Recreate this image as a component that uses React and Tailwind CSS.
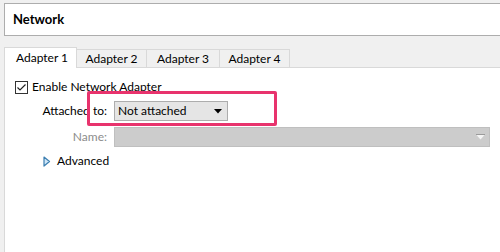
import React from 'react';

const tabs = [
  { label: 'Adapter 1', width: 'w-[73px]' },
  { label: 'Adapter 2', width: 'w-[70px]' },
  { label: 'Adapter 3', width: 'w-[73px]' },
  { label: 'Adapter 4', width: 'w-[70px]' },
];

const App = () => {
  return (
    <div
      className="relative w-[500px] h-[252px] bg-[#f0f0f0] overflow-hidden flex flex-col text-[12px] text-black"
      style={{ fontFamily: 'Lato, "Liberation Sans", sans-serif' }}
    >
      {/* Header */}
      <div className="mt-[3px] ml-[4px] h-[33px] bg-white border border-r-0 border-[#adadad] flex items-center pl-[8px]">
        <span className="font-bold text-[13px]">Network</span>
      </div>

      {/* Tabs */}
      <div className="mt-[11px] ml-[4px] h-[20px] flex items-end relative z-10">
        {tabs.map((tab, i) => (
          <div
            key={tab.label}
            className={
              i === 0
                ? `h-[21px] ${tab.width} bg-white border border-b-0 border-[#d9d9d9] flex items-center pl-[11px] -mb-[1px]`
                : `h-[18px] ${tab.width} bg-[#f0f0f0] border border-l-0 border-b-0 border-[#d9d9d9] flex items-center justify-center`
            }
          >
            {tab.label}
          </div>
        ))}
      </div>

      {/* Content */}
      <div className="ml-[4px] flex-1 bg-white border-l border-t border-[#d9d9d9] pl-[10px]">
        <div className="mt-[12px] h-[14px] flex items-center">
          <div className="w-[13px] h-[13px] border border-[#333] bg-white flex items-center justify-center">
            <svg width="11" height="11" viewBox="0 0 11 11">
              <path d="M1.5 5.5 L4 8 L9.5 2.5" fill="none" stroke="#222" strokeWidth="1.2" />
            </svg>
          </div>
          <span className="ml-[4px]">Enable Network Adapter</span>
        </div>

        <div className="mt-[7px] h-[20px] flex items-center">
          <span className="w-[92px] text-right">Attached to:</span>
          <div className="ml-[7px] w-[114px] h-[20px] bg-[#e5e5e5] border border-[#adadad] flex items-center pl-[3px] pr-[5px] justify-between">
            <span>Not attached</span>
            <svg width="8" height="5" viewBox="0 0 8 5">
              <path d="M0 0 H8 L4 4.5 Z" fill="#000" />
            </svg>
          </div>
        </div>

        <div className="mt-[6px] h-[20px] flex items-center">
          <span className="w-[92px] text-right text-[#8c8c8c]">Name:</span>
          <div className="ml-[7px] w-[376px] h-[20px] bg-[#cccccc] border border-[#bfbfbf] flex items-center justify-end pr-[4px]">
            <svg width="9" height="6" viewBox="0 0 9 6">
              <path d="M0 0.5 H9 L4.5 5.5 Z" fill="#f4f4f4" />
              <path d="M0 0.5 H9" stroke="#9a9a9a" strokeWidth="1" />
            </svg>
          </div>
        </div>

        <div className="mt-[6px] h-[16px] flex items-center pl-[28px]">
          <svg width="8" height="11" viewBox="0 0 8 11">
            <path d="M1 1 L6.5 5.5 L1 10 Z" fill="#cfe6f8" stroke="#3c7fb1" strokeWidth="1.2" strokeLinejoin="round" />
          </svg>
          <span className="ml-[6px]">Advanced</span>
        </div>
      </div>

      {/* Annotation highlight */}
      <div className="absolute left-[87px] top-[91px] w-[190px] h-[35px] border-[3px] border-[#e8336d] rounded-[2px] pointer-events-none" />
    </div>
  );
};

export default App;
